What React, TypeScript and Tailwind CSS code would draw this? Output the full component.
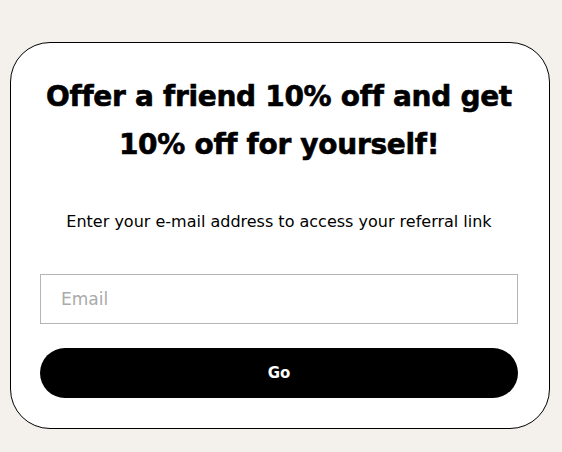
import React from "react";

export default function App() {
  return (
    <div className="min-h-[452px] w-full bg-[#f4f1ec] px-[10px] pt-[42px] font-['DejaVu_Sans',sans-serif]">
      <div className="w-[540px] rounded-[40px] border border-black bg-white pb-[30px] pl-[29px] pr-[31px] pt-[30px]">
        <h2 className="text-center text-[28px] font-bold leading-[48px] tracking-[-0.3px] text-black [-webkit-text-stroke:0.6px_black]">
          Offer a friend 10% off and get
          <br />
          10% off for yourself!
        </h2>
        <p className="mt-[41px] text-center text-[16px] leading-6 text-black">
          Enter your e-mail address to access your referral link
        </p>
        <input
          type="email"
          placeholder="Email"
          className="mt-[40px] block h-[50px] w-full border border-[#b5b5b5] px-5 text-[17px] text-black outline-none placeholder:text-[#aaaaaa]"
        />
        <button className="mt-[24px] flex h-[50px] w-full items-center justify-center rounded-full bg-black text-[15px] font-bold text-white">
          Go
        </button>
      </div>
    </div>
  );
}
